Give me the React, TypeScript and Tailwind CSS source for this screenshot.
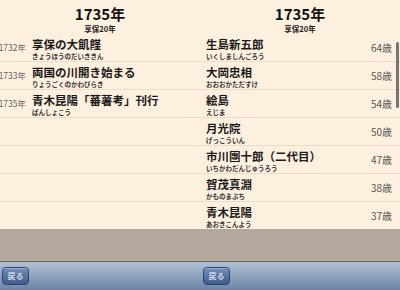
import React from 'react';

type Event = { year: string; title: string; reading: string };
type Person = { name: string; reading: string; age: string };

const events: Event[] = [
  { year: '1732年', title: '享保の大飢饉', reading: 'きょうほうのだいききん' },
  { year: '1733年', title: '両国の川開き始まる', reading: 'りょうごくのかわびらき' },
  { year: '1735年', title: '青木昆陽「蕃薯考」刊行', reading: 'ばんしょこう' },
];

const people: Person[] = [
  { name: '生島新五郎', reading: 'いくしましんごろう', age: '64歳' },
  { name: '大岡忠相', reading: 'おおおかただすけ', age: '58歳' },
  { name: '絵島', reading: 'えじま', age: '54歳' },
  { name: '月光院', reading: 'げっこういん', age: '50歳' },
  { name: '市川團十郎（二代目）', reading: 'いちかわだんじゅうろう', age: '47歳' },
  { name: '賀茂真淵', reading: 'かものまぶち', age: '38歳' },
  { name: '青木昆陽', reading: 'あおきこんよう', age: '37歳' },
];

const Header = () => (
  <div className="h-[40px] flex flex-col items-center pt-[5px]">
    <div className="text-[15px] font-bold leading-[18px] text-[#111]">1735年</div>
    <div className="text-[7.5px] font-bold leading-[10px] mt-[1px] text-[#222]">享保20年</div>
  </div>
);

const BackButton = () => (
  <button className="w-[27px] h-[18px] rounded-[4px] border border-[#2e4570] bg-gradient-to-b from-[#7490bd] to-[#3f5b8c] text-white text-[8px] leading-none shadow-[inset_0_1px_0_rgba(255,255,255,0.35)]">
    戻る
  </button>
);

export default function App() {
  return (
    <div className="w-[400px] h-[290px] flex flex-col overflow-hidden bg-[#fef0df] font-['Noto_Sans_CJK_JP','Noto_Sans',sans-serif]">
      <div className="flex h-[229px] overflow-hidden">
        {/* 年表 */}
        <div className="w-[200px] flex flex-col overflow-hidden">
          <Header />
          {events.map((e) => (
            <div key={e.title} className="h-[28px] shrink-0 flex items-start border-b border-[#ecdcc8]">
              <div className="w-[26px] shrink-0 self-center flex justify-end">
                <span className="text-[8.5px] text-[#666] leading-none whitespace-nowrap">{e.year}</span>
              </div>
              <div className="ml-[6px] pt-[4px]">
                <div className="text-[11.5px] font-semibold leading-[13px] text-[#1a1a1a] whitespace-nowrap">{e.title}</div>
                <div className="text-[6.5px] font-bold leading-[8px] mt-[1px] text-[#333] whitespace-nowrap">{e.reading}</div>
              </div>
            </div>
          ))}
          {[0, 1, 2, 3, 4].map((i) => (
            <div key={i} className="h-[28px] shrink-0 border-b border-[#ecdcc8]" />
          ))}
        </div>

        {/* 人物 */}
        <div className="w-[200px] flex flex-col relative">
          <Header />
          {people.map((p) => (
            <div key={p.name} className="h-[28px] shrink-0 flex items-start border-b border-[#ecdcc8] pl-[6px] pr-[8px]">
              <div className="flex-1 pt-[4px]">
                <div className="text-[11.5px] font-semibold leading-[13px] text-[#1a1a1a] whitespace-nowrap">{p.name}</div>
                <div className="text-[6.5px] font-bold leading-[8px] mt-[1px] text-[#333] whitespace-nowrap">{p.reading}</div>
              </div>
              <div className="self-center text-[10px] leading-none text-[#555]">{p.age}</div>
            </div>
          ))}
          <div className="absolute right-[1px] top-[42px] w-[3px] h-[66px] rounded-full bg-[#555]/80" />
        </div>
      </div>

      <div className="h-[32px] bg-[#b3a89b]" />
      <div className="h-[1px] bg-[#5f5f5f]" />
      <div className="flex h-[28px] bg-gradient-to-b from-[#b3c0d2] to-[#6d84a6]">
        <div className="w-[200px] flex items-center pl-[2px]">
          <BackButton />
        </div>
        <div className="w-[200px] flex items-center pl-[3px]">
          <BackButton />
        </div>
      </div>
    </div>
  );
}
